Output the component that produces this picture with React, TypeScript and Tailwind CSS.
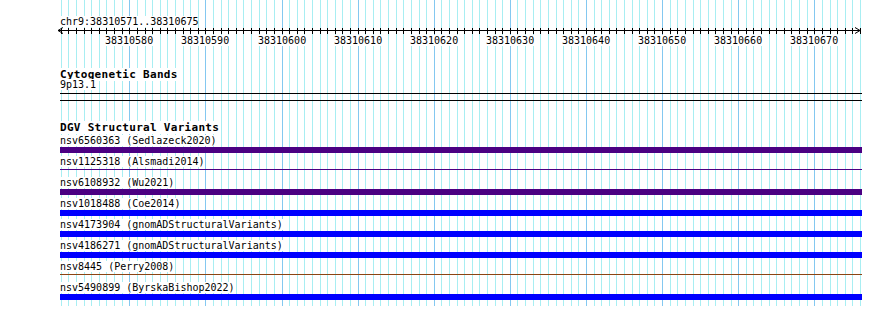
import React from 'react';

const START_X = 129.3; // pixel of 38310580
const BP_PX = 7.611;
const ticks = Array.from({ length: 106 }, (_, i) => i - 9);
const tickX = (k: number) => Math.round(START_X + BP_PX * k) + 0.5;

const features = [
  { label: 'nsv6560363 (Sedlazeck2020)', color: 'bg-[#4b0082]', thin: false },
  { label: 'nsv1125318 (Alsmadi2014)', color: 'bg-[#4b0082]', thin: true },
  { label: 'nsv6108932 (Wu2021)', color: 'bg-[#4b0082]', thin: false },
  { label: 'nsv1018488 (Coe2014)', color: 'bg-[#0000ff]', thin: false },
  { label: 'nsv4173904 (gnomADStructuralVariants)', color: 'bg-[#0000ff]', thin: false },
  { label: 'nsv4186271 (gnomADStructuralVariants)', color: 'bg-[#0000ff]', thin: false },
  { label: 'nsv8445 (Perry2008)', color: 'bg-[#8b4513]', thin: true },
  { label: 'nsv5490899 (ByrskaBishop2022)', color: 'bg-[#0000ff]', thin: false },
];

const GridLines = () => (
  <svg className="absolute left-0 top-0" width={890} height={306}>
    {ticks.map(k => (
      <line
        key={k}
        x1={tickX(k)}
        x2={tickX(k)}
        y1={0}
        y2={306}
        stroke={k % 10 === 0 ? '#84c8f0' : '#a8eef2'}
        strokeWidth={1}
      />
    ))}
  </svg>
);

const Ruler = () => (
  <svg className="block -ml-[4px]" width={810} height={8}>
    <line x1={2} x2={804} y1={3.5} y2={3.5} stroke="#000" strokeWidth={1} />
    <polyline points="7,0.5 2,3.5 7,6.5" fill="none" stroke="#000" strokeWidth={1} />
    <polyline points="799,0.5 804,3.5 799,6.5" fill="none" stroke="#000" strokeWidth={1} />
    {ticks.map(k => (
      <line key={k} x1={tickX(k) - 56} x2={tickX(k) - 56} y1={1} y2={7} stroke="#000" strokeWidth={1} />
    ))}
  </svg>
);

export default function App() {
  const labels = Array.from({ length: 10 }, (_, i) => i);

  return (
    <div className="relative w-[890px] h-[336px] bg-white overflow-hidden text-black font-['DejaVu_Sans_Mono',monospace]">
      <GridLines />
      <div className="relative pl-[60px] pt-[16px] w-[862px]">
        <div className="h-[11px] text-[10px] leading-[11px]">
          <span className="bg-white">chr9:38310571..38310675</span>
        </div>

        <Ruler />

        <div className="relative h-[11px] text-[10px] leading-[11px]">
          {labels.map(i => (
            <span
              key={i}
              className="absolute top-0 bg-white"
              style={{ left: Math.round(START_X + BP_PX * 10 * i) - 60 - 24 }}
            >
              {38310580 + i * 10}
            </span>
          ))}
        </div>

        <div className="mt-[23px] h-[11px] text-[11px] leading-[11px] font-bold tracking-[0.3px]">
          <span className="bg-white">Cytogenetic Bands</span>
        </div>
        <div className="h-[10px] text-[10px] leading-[10px]">
          <span className="bg-white">9p13.1</span>
        </div>
        <div className="mt-[3px] h-[8px] w-[802px] border-y border-black" />

        <div className="mt-[21px] h-[12px] text-[11px] leading-[12px] font-bold tracking-[0.3px]">
          <span className="bg-white">DGV Structural Variants</span>
        </div>

        <div className="mt-[1px] flex flex-col">
          {features.map(f => (
            <div key={f.label} className="h-[21px]">
              <div className="h-[11px] text-[10px] leading-[11px]">
                <span className="bg-white">{f.label}</span>
              </div>
              <div className="mt-[1px] h-[6px] w-[802px]">
                {f.thin ? (
                  <div className={`mt-[2px] h-[1px] w-full ${f.color}`} />
                ) : (
                  <div className={`h-[6px] w-full ${f.color}`} />
                )}
              </div>
            </div>
          ))}
        </div>
      </div>
    </div>
  );
}
